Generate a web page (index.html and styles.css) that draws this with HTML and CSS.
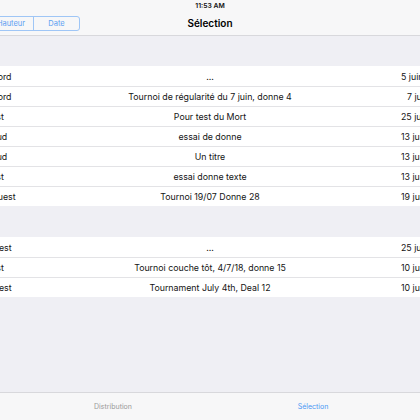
FILE: index.html
```html
<!DOCTYPE html>
<html lang="fr">
<head>
<meta charset="utf-8">
<title>Sélection</title>
<link rel="stylesheet" href="styles.css">
</head>
<body>
<header class="top">
  <div class="status">11:53 AM</div>
  <div class="nav">
    <div class="nav-left">
      <div class="segmented">
        <span class="seg first">Hauteur</span>
        <span class="seg">Date</span>
      </div>
    </div>
    <div class="title">Sélection</div>
    <div class="nav-right"></div>
  </div>
</header>
<main class="main">
  <div class="content">
    <section class="section first">
      <div class="row"><span class="who">Nord</span><span class="name">...</span><span class="date">5 juin</span></div>
      <div class="row"><span class="who">Nord</span><span class="name">Tournoi de régularité du 7 juin, donne 4</span><span class="date shift">7 juin</span></div>
      <div class="row"><span class="who">Est</span><span class="name">Pour test du Mort</span><span class="date">25 juin</span></div>
      <div class="row"><span class="who">Sud</span><span class="name">essai de donne</span><span class="date">13 juil.</span></div>
      <div class="row"><span class="who">Sud</span><span class="name">Un titre</span><span class="date">13 juil.</span></div>
      <div class="row"><span class="who">Est</span><span class="name">essai donne texte</span><span class="date">13 juil.</span></div>
      <div class="row"><span class="who">Ouest</span><span class="name">Tournoi 19/07 Donne 28</span><span class="date">19 juil.</span></div>
    </section>
    <section class="section">
      <div class="row"><span class="who wide">Ouest</span><span class="name">...</span><span class="date">25 juin</span></div>
      <div class="row"><span class="who">Est</span><span class="name">Tournoi couche tôt, 4/7/18, donne 15</span><span class="date">10 juil.</span></div>
      <div class="row"><span class="who wide">Ouest</span><span class="name">Tournament July 4th, Deal 12</span><span class="date">10 juil.</span></div>
    </section>
  </div>
</main>
<nav class="tabbar">
  <span class="tab">Distribution</span>
  <span class="tab active">Sélection</span>
</nav>
</body>
</html>
```

FILE: styles.css
```css
html, body {
  margin: 0;
  padding: 0;
}

body {
  width: 420px;
  height: 420px;
  overflow: hidden;
  background: #efeff4;
  font-family: Inter, "Noto Sans", sans-serif;
  color: #111;
  display: flex;
  flex-direction: column;
}

.top {
  background: #f7f7f8;
  border-bottom: 1px solid #d8d8dc;
}

.status {
  height: 11px;
  font-size: 6.8px;
  font-weight: 600;
  line-height: 11px;
  text-align: center;
  color: #111;
}

.nav {
  height: 24px;
  display: grid;
  grid-template-columns: 1fr auto 1fr;
  align-items: center;
}

.nav-left {
  display: flex;
}

.segmented {
  display: flex;
  margin-left: -15px;
  border: 1px solid #9fc6f6;
  border-radius: 3px;
  height: 15px;
  box-sizing: border-box;
}

.seg {
  width: 45px;
  display: flex;
  align-items: center;
  justify-content: center;
  font-size: 7.5px;
  color: #5d9ff2;
}

.seg.first {
  width: 47px;
  padding-left: 3px;
  box-sizing: border-box;
}

.seg + .seg {
  border-left: 1px solid #9fc6f6;
}

.title {
  font-size: 10px;
  font-weight: 600;
  color: #000;
}

.main {
  flex: 1;
}

.content {
  margin: 0 -25px;
}

.section {
  margin-top: 31px;
  background: #fff;
}

.section.first {
  margin-top: 30px;
}

.row {
  height: 20px;
  box-sizing: border-box;
  padding: 0 16px;
  display: grid;
  grid-template-columns: minmax(0, 1fr) auto minmax(0, 1fr);
  align-items: center;
  font-size: 8.8px;
  white-space: nowrap;
  color: #141414;
}

.row + .row {
  border-top: 1px solid #e3e3e6;
}

.who {
  justify-self: start;
}

.who.wide {
  margin-left: -4px;
}

.name {
  text-align: center;
}

.date {
  justify-self: end;
  width: 28px;
}

.date.shift {
  width: 22px;
}

.tabbar {
  height: 28px;
  box-sizing: border-box;
  border-top: 1px solid #d8d8dc;
  background: #f7f7f8;
  display: flex;
  justify-content: center;
  align-items: center;
  padding-left: 6px;
}

.tab {
  width: 200px;
  text-align: center;
  font-size: 7px;
  color: #999;
}

.tab.active {
  color: #4b97f4;
}
```
